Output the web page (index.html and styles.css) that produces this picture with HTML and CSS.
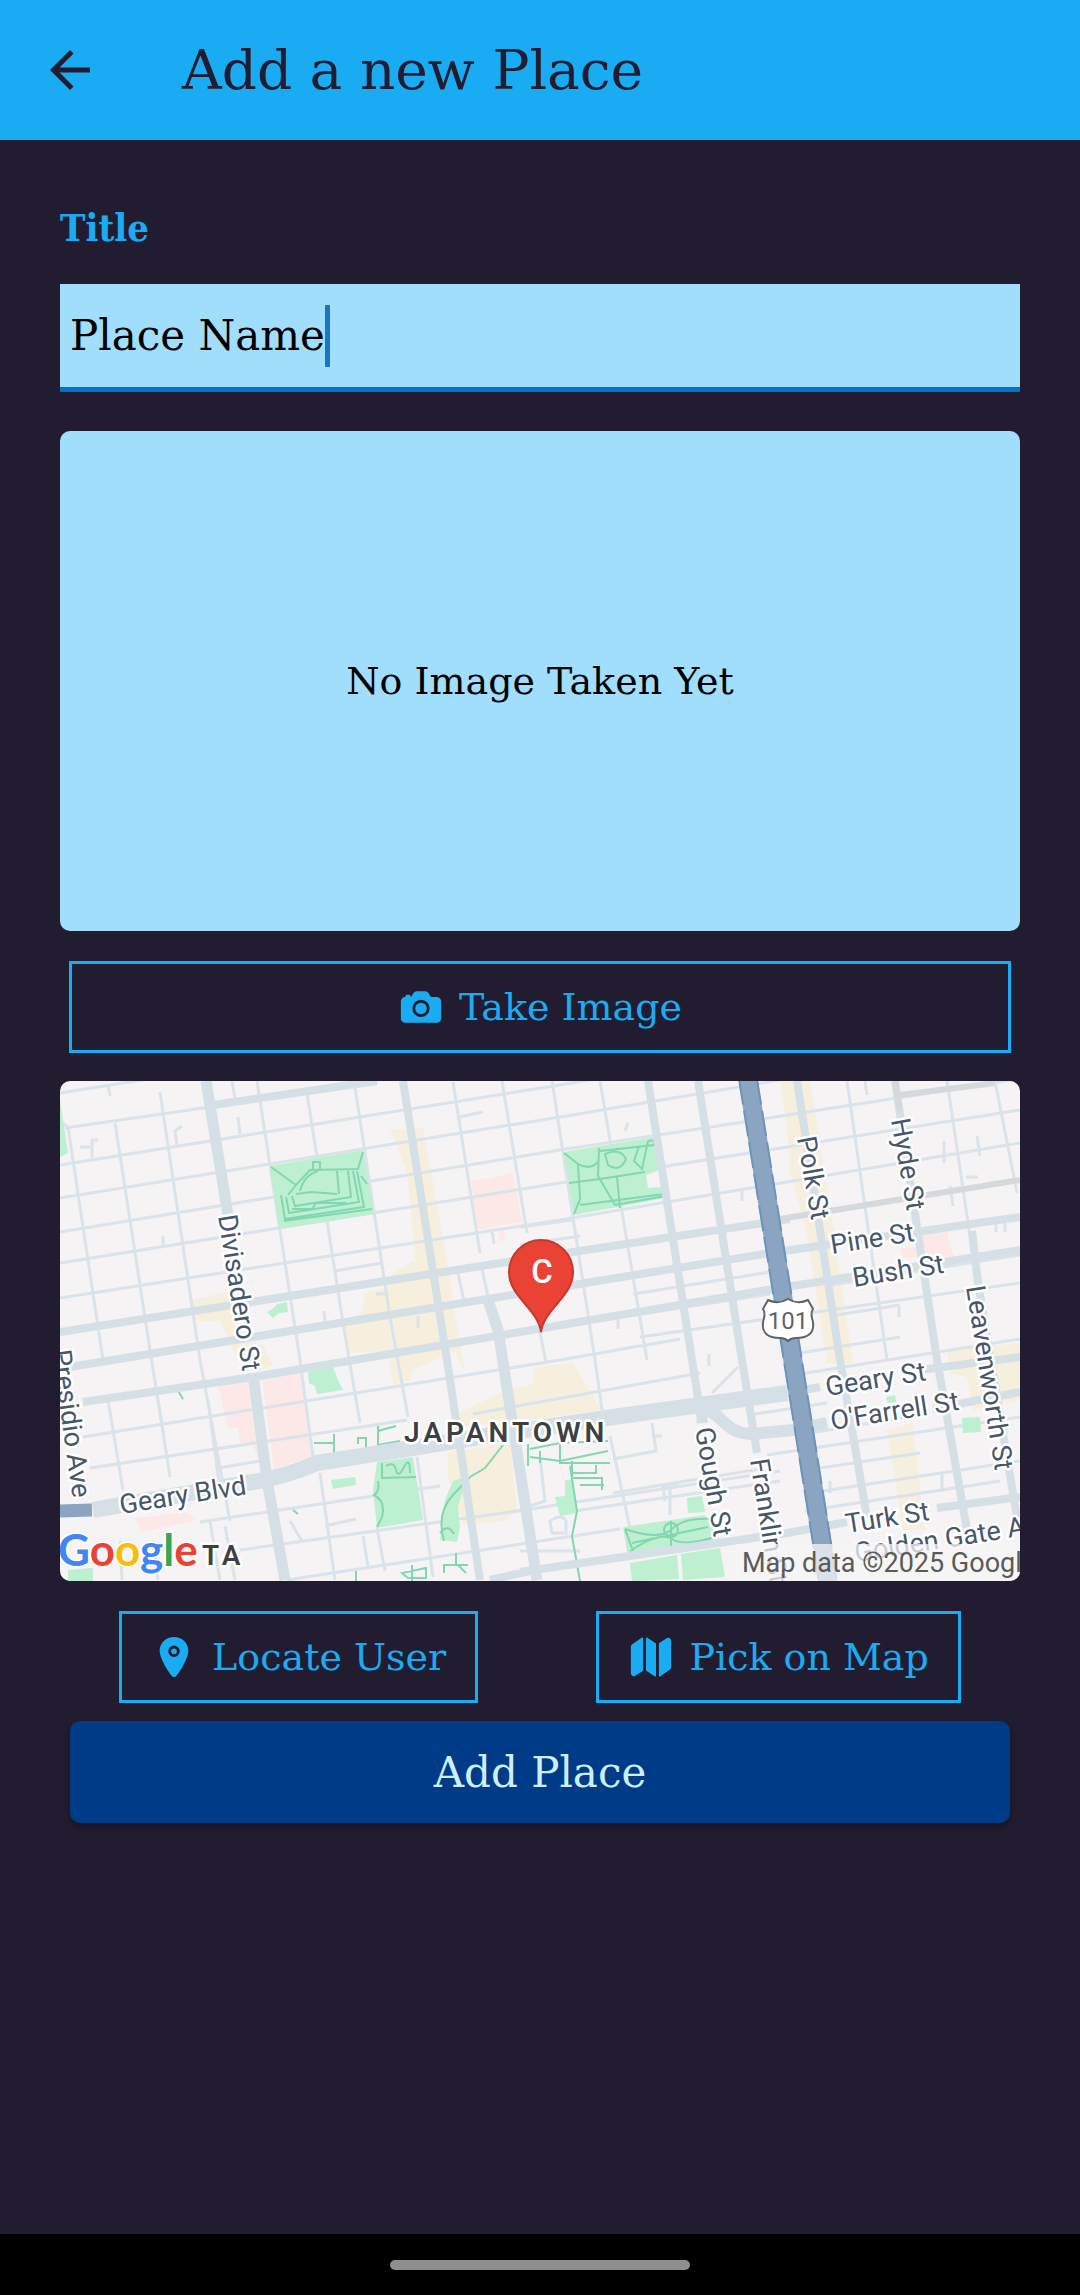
FILE: index.html
```html
<!DOCTYPE html>
<html lang="en">
<head>
<meta charset="utf-8">
<meta name="viewport" content="width=device-width, initial-scale=1">
<title>Add a new Place</title>
<link rel="stylesheet" href="styles.css">
</head>
<body>
<header class="app-bar">
  <button class="back" type="button" aria-label="Back">
    <svg class="back-icon" viewBox="0 0 24 24" aria-hidden="true"><path d="M20 11H7.83l5.59-5.59L12 4l-8 8 8 8 1.41-1.41L7.83 13H20z"/></svg>
  </button>
  <h1 class="app-title">Add a new Place</h1>
</header>

<main class="form">
  <label class="label" for="title">Title</label>
  <div class="field">
    <input class="input" id="title" type="text" value="Place Name">
    <span class="caret"></span>
  </div>

  <div class="preview"><p class="preview-text">No Image Taken Yet</p></div>

  <button class="outlined wide" type="button">
    <svg class="icon" viewBox="0 0 512 512" aria-hidden="true"><circle cx="256" cy="272" r="64"/><path d="M432 144h-59c-3 0-6.72-1.94-9.62-5l-25.94-40.94a15.52 15.52 0 00-1.37-1.85C327.11 85.76 315 80 302 80h-92c-13 0-25.11 5.76-34.07 16.21a15.52 15.52 0 00-1.37 1.85l-25.94 41c-2.22 2.42-5.34 5-8.62 5v-8a16 16 0 00-16-16h-24a16 16 0 00-16 16v8h-4a48.05 48.05 0 00-48 48V384a48.05 48.05 0 0048 48h352a48.05 48.05 0 0048-48V192a48.05 48.05 0 00-48-48zm-176 224a96 96 0 1196-96 96.11 96.11 0 01-96 96z"/></svg>
    Take Image
  </button>

  <div class="preview map">
    <svg class="map-art" viewBox="0 0 960 500" preserveAspectRatio="xMidYMid slice" role="img" aria-label="Map of Japantown">
      <g class="cream">
        <path d="M330 49L363 47 387 179 397 246 405 292 395 270 353 289 350 300 333 303 327 270 288 272 285 246 303 229 305 212 327 206 333 192 355 179 353 152 347 92 335 59z"/>
        <path d="M132 219L167 211 180 262 202 262 213 284 198 290 176 275 160 240 135 240z"/>
        <path d="M400 331L447 309 473 303 473 286 513 282 542 329 460 341 400 345z"/>
        <path d="M388 371L450 362 457 431 443 440 403 444 395 410 388 399z"/>
        <path d="M720 0H750L768 110 793 282H767L747 152 730 92 727 46z"/>
        <path d="M827 349L853 342 865 449H843z"/>
        <path d="M887 269L960 262V319L913 329 907 296 890 292z"/>
      </g>
      <g class="pink">
        <path d="M411 99L430 98 453 91 462 141 418 148zM438 149l6-1 1 10-5 3z"/>
        <path d="M158 304L187 299 199 379 192 362 180 362 178 347 168 347z"/>
        <path d="M202 296L242 289 254 375 214 388z"/>
        <path d="M75 437L127 431 137 439 82 451z"/>
        <path d="M863 152L887 151 893 176 843 176 840 167 863 165z"/>
      </g>
      <g class="minor">
        <path d="M0 12L113-6M5 47L150 26M0 84L500 4 540-3M0 117L500 36 720-1M0 151L500 69 677 42 953-1M0 182L500 102 960 29M0 217L500 139 960 62M275 190L322 182M513 139L460 146M520 155L460 164"/>
        <path d="M23 356L500 279 620 258M30 387L347 339M413 333L640 292M573 213L710 191M580 256L960 202M575 234L710 213M765 205L960 174M770 235L840 224M740 293L960 258M740 272L840 256M695 333L767 322M707 374L960 336M553 412L700 388M750 412L960 380M740 390L860 372M745 430L940 400M140 441L380 405M180 469L457 430 720 390M227 499L500 457 560 448M514 430L720 400M158 387L200 380M750 352L860 334"/>
        <path d="M8 46L43 279M55 42L90 269 110 396M100 11L140 279 170 440M197 0L240 279 253 376M247 12L283 242 300 342M295 6L330 236 348 336M393 1L420 172M398 192L404 220M442 0L467 152M422 188L428 215M492 0L535 279 542 329M540 0L587 279M480 251L486 282M787 0L827 279M887 0L917 202M935 0L957 112M0 40L8 46M48 319L63 409M97 312L104 356M148 319L160 409M260 392L275 499M303 455L308 485M317 447L325 490M357 376L373 496M150 441L160 499M165 445L175 499M550 355L570 447M592 342L596 370 553 378M60 460L62 499M93 460L98 499M230 440L242 460M265 445L296 438M480 376L485 420 470 425M460 470H520M490 440q12-8 16 0v12h-14zM560 340h14M592 355h10"/>
        <path d="M48 3l2 12M172 0l3 18M178 36l2 17M117 65l-2-15 7-5M32 77v-18h6M20 66h10M103 155v10M399 36l24-5M432 150l2 13M328 213h-12M264 230l1 12M358 235v12M565 50l3-8M682 110v10M805 0l2 14M884 60v22M917 55l3 20M906 96h12M890 105l3 20M936 141v10M945 141v10M839 226v10M558 238v10M649 273v12M610 404v30M605 420l-2-15 15-3M652 312L678 286M770 400v12M882 393v18"/>
      </g>
      <g class="park">
        <path d="M210 85L303 69 314 133 219 148z"/>
        <path d="M504 71L595 56 599 89 586 94 588 107 603 106 606 117 514 134z"/>
        <path d="M0 19L8 72 0 76zM8 489L33 487V500H8z"/>
        <path d="M207 231L214 227 217 223 227 221 228 231 219 232 213 237z"/>
        <path d="M248 291L273 286 278 299 283 309 257 313 255 305 249 302z"/>
        <path d="M317 381L353 376 363 439 317 447 313 409z"/>
        <path d="M271 399L295 396 296 404 273 408z"/>
        <path d="M385 419L393 400 408 395 398 425 400 446 397 461 380 459z"/>
        <path d="M495 416L505 415 505 399H513L517 432 500 435z"/>
        <path d="M563 446L645 434 660 459 568 476zM570 482L617 474 619 498 572 500zM621 473L660 467 665 496 623 499z"/>
        <path d="M627 417L642 415 645 431 628 432zM902 337L920 336 921 351 903 352zM826 316l9-2 1 7-8 1z"/>
      </g>
      <g class="trail">
        <path d="M211 86L236 104 250 89 298 88 303 71M236 104L228 114M240 110Q244 94 258 90M253 88v-7h7v7M221 114L225 138 304 126 297 90M226 116L229 132 299 121 293 90M232 115L235 125 291 116 288 90M277 90L279 113M236 113l15-2 26 2M224 140L312 128M232 128h20l4-6h30M301 95l6 8"/>
        <path d="M504 72L518 83 520 118 514 133M539 67L538 95 555 124 605 115M509 102L540 98 585 91M518 83Q530 90 539 80M545 73Q560 66 566 78 560 92 548 84zM557 96L560 127M588 60L582 88 574 80 579 65M540 70L594 64Q596 58 588 60M520 124L604 113"/>
        <path d="M322 382V397L356 396M326 385q8-5 10 4t8-3 6 6M318 400q2 10-4 14 12 6 8 22l-5 10M443 364L425 387 410 396 393 414Q376 432 384 460M380 452q8-10 14 1"/>
        <path d="M274 353v21M254 362h20M298 363v-6h8v11M318 345v20M318 350l18-5M318 364l22-4M468 363v22M470 368l30-6 48-2M470 376l30 4 48-10M480 370v12M500 362v20h50M512 380v17h30v12M520 404h24M512 392h24v-8M510 385L517 430 512 455 520 500M384 492v-8h14l8 8M396 472v12h12M342 492l24-5v10h-18zM352 484v16M296 490v10M117 308l6 10M233 429l5 4"/>
        <path d="M565 448L573 470M565 448Q600 460 612 448T652 438M570 470Q600 450 612 458T658 455M572 462L648 446M611 440V466M604 449a7 7 0 1014 0 7 7 0 10-14 0"/>
      </g>
      <g class="road">
        <path d="M153 24L317 0M343 0L387 279 420 499M588 0L632 279 642 342M638 0L682 279 697 372M737 0L780 279 807 436M835 0L877 279 907 449M912 150L918 202 957 436M0 251L447 181 513 171 730 138M10 286L193 256 513 204 710 172 960 136M23 321L193 296 460 251 707 209 960 169M860 289L960 276M873 328L960 311M460 491L727 452 787 441M877 427L960 416M430 499L470 490"/>
      </g>
      <path class="road grey" d="M720 138L960 99M835 0L840 30M840 14L935 2"/>
      <path class="road avenue" d="M146 0L169 140M193 294L207 399 225 499M428 219L438 249 477 499M642 325V342"/>
      <path class="road curve" d="M645 328C664 334 664 352 692 353L733 349 767 342"/>
      <path class="road boulevard" d="M33 429L193 401Q225 396 257 382L333 370 413 357 553 336 640 324 727 312"/>
      <path class="road" d="M727 312L760 306"/>
      <path class="highway-short" d="M0 430L32 429"/>
      <path class="highway" d="M688-2L762 462 768 502"/>
      <path class="highway-dash" d="M697-2L771 462 777 502M679-2L753 462 759 502"/>

      <g class="street">
        <text transform="translate(158 135) rotate(81)">Divisadero St</text>
        <text transform="translate(831 39) rotate(80)">Hyde St</text>
        <text transform="translate(737 57) rotate(80)">Polk St</text>
        <text transform="translate(635 348) rotate(80)">Gough St</text>
        <text transform="translate(690 379) rotate(81)">Franklin St</text>
        <text transform="translate(906 206) rotate(81)">Leavenworth St</text>
        <text transform="translate(-8 270) rotate(82)">Presidio Ave</text>
        <text transform="translate(772 173) rotate(-9)">Pine St</text>
        <text transform="translate(794 206) rotate(-9)">Bush St</text>
        <text transform="translate(767 315) rotate(-9)">Geary St</text>
        <text transform="translate(772 349) rotate(-9)">O'Farrell St</text>
        <text transform="translate(787 452) rotate(-9)">Turk St</text>
        <text transform="translate(796 481) rotate(-9)">Golden Gate Ave</text>
        <text transform="translate(61 433) rotate(-9)">Geary Blvd</text>
      </g>
      <text class="district" x="344" y="361">JAPANTOWN</text>
      <text class="district" x="142" y="484">TA</text>

      <path class="shield" d="M708 219q10 5 20-1 10 6 20 1l5 9q-3 4 0 13 2 16-17 16-5 0-8 3-3-3-8-3-19 0-17-16 3-9 0-13z"/>
      <text class="route" x="728" y="248">101</text>

      <path class="marker" d="M481 251C478 228 449 216 449 191a32 32 0 0164 0C513 216 484 228 481 251z"/>
      <text class="marker-letter" x="482" y="202">C</text>

      <text class="google" x="-2" y="485"><tspan class="g-blue">G</tspan><tspan class="g-red">o</tspan><tspan class="g-yellow">o</tspan><tspan class="g-blue">g</tspan><tspan class="g-green">l</tspan><tspan class="g-red">e</tspan></text>
      <path class="credit-back" d="M676 463H960V500H676z"/>
      <text class="credit" x="682" y="491">Map data ©2025 Google</text>
    </svg>
  </div>

  <div class="actions">
    <button class="outlined" type="button">
      <svg class="icon" viewBox="0 0 512 512" aria-hidden="true"><circle cx="256" cy="192" r="32"/><path d="M256 32c-88.22 0-160 68.65-160 153 0 40.17 18.31 93.59 54.42 158.78 29 52.34 62.55 99.67 80 123.22a31.75 31.75 0 0051.22 0c17.42-23.55 51-70.88 80-123.22C397.69 278.61 416 225.19 416 185c0-84.35-71.78-153-160-153zm0 224a64 64 0 1164-64 64.07 64.07 0 01-64 64z"/></svg>
      Locate User
    </button>
    <button class="outlined" type="button">
      <svg class="icon" viewBox="0 0 512 512" aria-hidden="true"><path d="M48.17 113.34A32 32 0 0032 141.24V438a32 32 0 0047 28.37c.43-.23.85-.47 1.26-.74l84.14-55.05a8 8 0 003.63-6.72V46.45a8 8 0 00-12.51-6.63zM212.36 39.31A8 8 0 00200 46v357.56a8 8 0 003.63 6.72l96 62.42A8 8 0 00312 466V108.67a8 8 0 00-3.64-6.73zM464.53 46.47a31.64 31.64 0 00-31.5-.88 12.07 12.07 0 00-1.25.74l-84.15 55a8 8 0 00-3.63 6.72v357.46a8 8 0 0012.52 6.63l107.07-73.46a32 32 0 0016.41-28v-296a32.76 32.76 0 00-15.47-28.21z"/></svg>
      Pick on Map
    </button>
  </div>

  <button class="submit" type="submit">Add Place</button>
</main>

<footer class="nav-bar"><div class="nav-pill"></div></footer>
</body>
</html>
```

FILE: styles.css
```css
* { box-sizing: border-box; }

body {
  margin: 0;
  min-height: 100vh;
  display: flex;
  flex-direction: column;
  background: #221c30;
  color: #000;
  font-family: "Roboto Slab", "DejaVu Serif", serif;
  font-size: 38px;
}

button, input { font: inherit; }
button { cursor: pointer; }

.app-bar {
  display: flex;
  align-items: center;
  gap: 82px;
  height: 140px;
  padding: 0 40px;
  background: #1aacf3;
  color: #221c30;
}

.back {
  display: flex;
  padding: 0;
  border: 0;
  background: none;
  color: inherit;
}

.back-icon { width: 60px; height: 60px; fill: currentColor; }

.app-title {
  margin: 0;
  font-size: 55px;
  line-height: 72px;
  font-weight: 400;
}

.form {
  flex: 1;
  display: flex;
  flex-direction: column;
  padding: 60px 60px 40px;
}

.label {
  padding-bottom: 28px;
  color: #1aacf3;
  font-family: "Roboto Slab", "DejaVu Serif Condensed", serif;
  font-weight: 700;
  line-height: 56px;
}

.field {
  display: flex;
  align-items: center;
  height: 108px;
  padding: 0 10px;
  border-bottom: 5px solid #0072cf;
  background: #a0defc;
  font-size: 42px;
}

.input {
  field-sizing: content;
  max-width: 100%;
  padding: 0;
  border: 0;
  outline: 0;
  background: none;
  color: #000;
}

.caret { width: 5px; height: 62px; background: #1976c0; }

.preview {
  display: flex;
  align-items: center;
  justify-content: center;
  height: 500px;
  margin-top: 39px;
  overflow: hidden;
  border-radius: 10px;
  background: #a0defc;
}

.preview-text { margin: 0; }

.outlined {
  display: flex;
  align-items: center;
  justify-content: center;
  gap: 15px;
  height: 92px;
  padding: 0 29px;
  border: 3px solid #1aacf3;
  background: none;
  color: #1aacf3;
}

.wide { margin: 30px 9px 28px; }

.icon { width: 46px; height: 46px; fill: currentColor; }

.actions {
  display: flex;
  justify-content: space-around;
  margin: 30px 0 18px;
}

.submit {
  height: 102px;
  margin: 0 10px;
  border: 0;
  border-radius: 10px;
  background: #003b87;
  box-shadow: 0 4px 8px rgba(0, 0, 0, 0.3);
  color: #cdeefd;
  font-size: 42px;
}

.nav-bar {
  display: flex;
  align-items: center;
  justify-content: center;
  height: 61px;
  background: #000;
}

.nav-pill { width: 300px; height: 10px; border-radius: 5px; background: #8e8e8e; }

/* Map */
.map { margin-top: 0; background: #f5f3f4; }
.map-art { width: 100%; height: 100%; font-family: Roboto, sans-serif; }
.map-art path { fill: none; }
.map-art .cream path { fill: #f7efdd; }
.map-art .pink path { fill: #fce8e6; }
.map-art .park path { fill: #bdefd1; }
.trail { stroke: #84d6b0; stroke-width: 2; }
.minor { stroke: #dae3ea; stroke-width: 3; }
.road { stroke: #d5dfe6; stroke-width: 8; stroke-linejoin: round; }
.grey { stroke: #d5d9dc; stroke-width: 6; }
.avenue { stroke-width: 11; }
.curve { stroke-width: 12; }
.boulevard { stroke-width: 16; }
.highway-short { stroke: #8aa4c1; stroke-width: 13; }
.highway { stroke: #8aa4c1; stroke-width: 19; }
.highway-dash { stroke: #6f92ba; stroke-width: 2; stroke-dasharray: 26 6; }

.street, .district {
  fill: #46566b;
  stroke: #fff;
  stroke-width: 5;
  stroke-linejoin: round;
  paint-order: stroke;
  font-size: 27px;
}

.district { fill: #3c4043; font-size: 28px; font-weight: 600; letter-spacing: 4px; }
.map-art .shield { fill: #fff; stroke: #5f6368; stroke-width: 2; }
.route { fill: #5f6368; font-size: 24px; text-anchor: middle; }
.map-art .marker { fill: #ea4335; stroke: #c5362c; stroke-width: 2; }
.marker-letter { fill: #fff; font-size: 33px; font-weight: 500; text-anchor: middle; }

.google {
  font-family: Lato, sans-serif;
  font-size: 44px;
  font-weight: 700;
  stroke: #fff;
  stroke-width: 3;
  paint-order: stroke;
}

.g-blue { fill: #4285f4; }
.g-red { fill: #ea4335; }
.g-yellow { fill: #fbbc04; }
.g-green { fill: #34a853; }
.map-art .credit-back { fill: rgba(245, 245, 245, 0.75); }
.credit { fill: #5a5a5a; font-size: 27px; }
```
